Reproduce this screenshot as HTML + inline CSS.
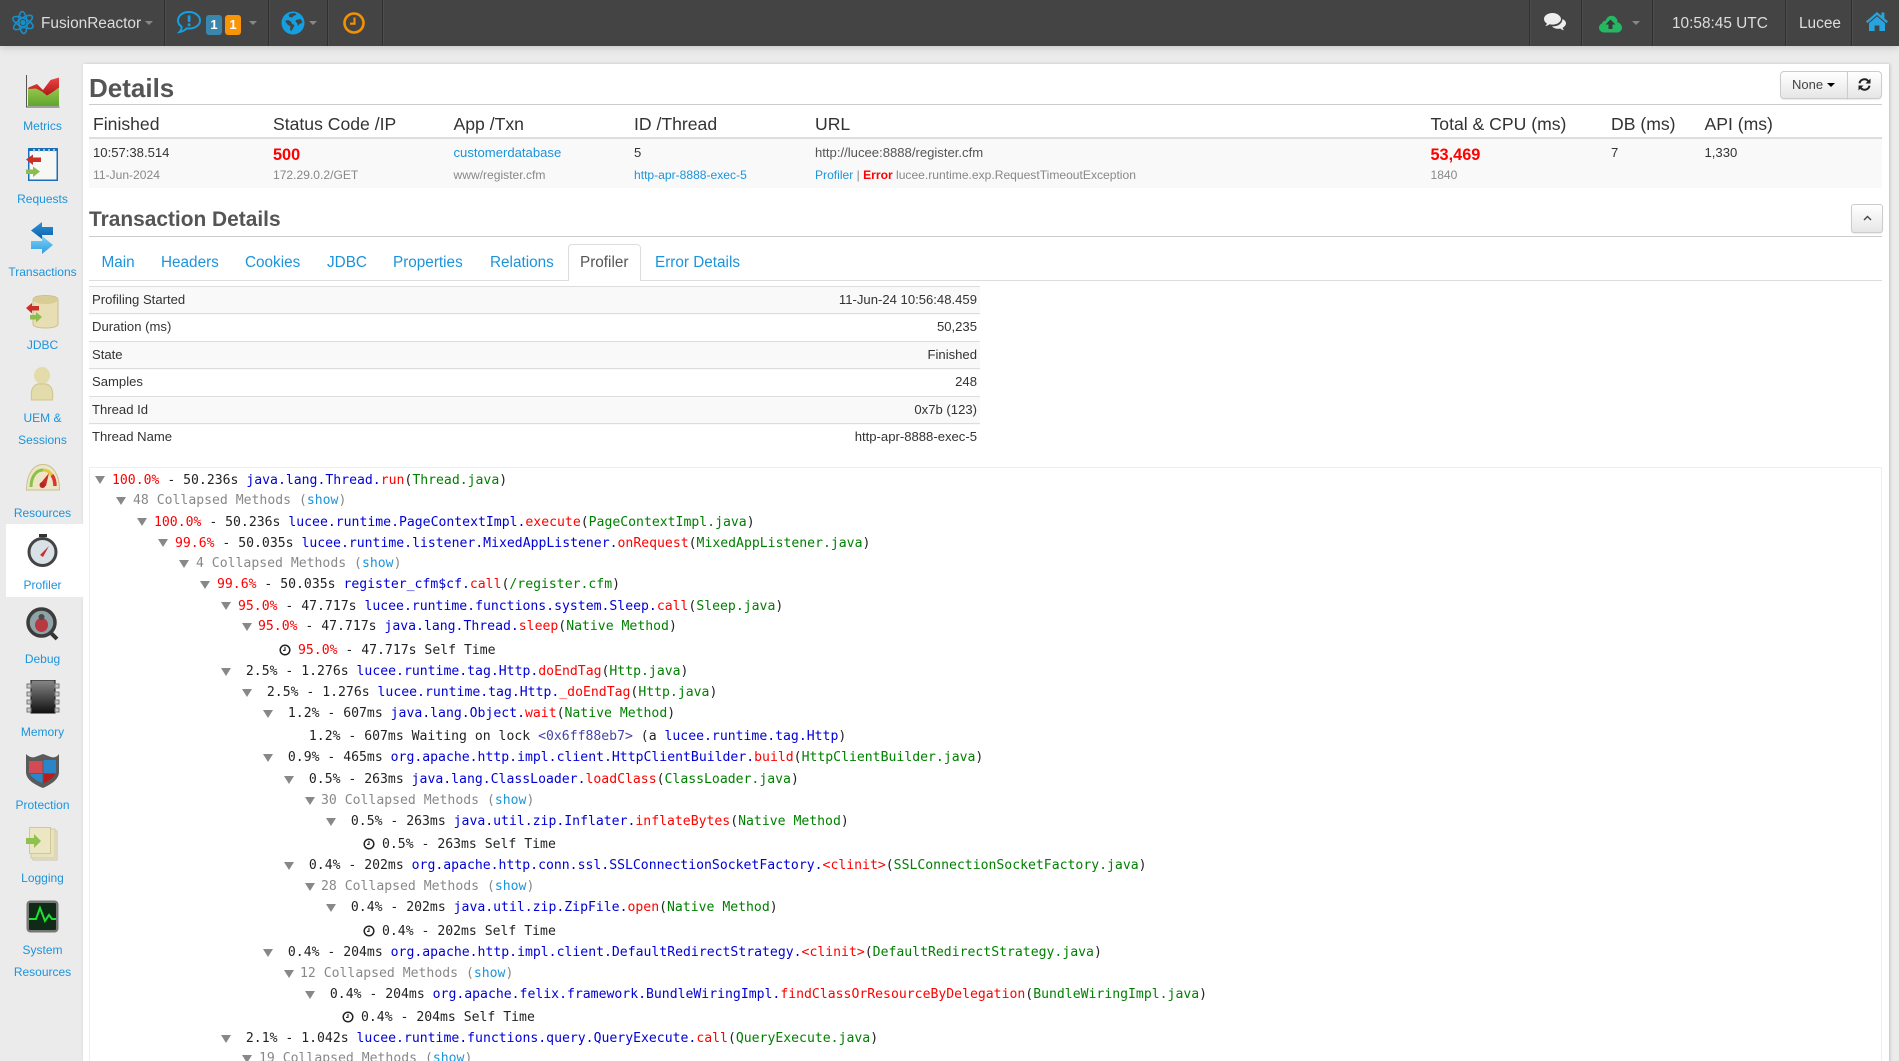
<!DOCTYPE html>
<html><head><meta charset="utf-8"><title>FusionReactor Profiler</title>
<style>
html{margin:0;padding:0;width:1899px;height:1061px;overflow:hidden}
body{margin:0;padding:0;width:1899px;height:1061px;overflow:hidden;position:relative;background:#ebebeb;font-family:"Liberation Sans",sans-serif;color:#333}
.a,.a *{box-sizing:border-box}
.a{position:absolute;white-space:nowrap}
a{color:#1c94db;text-decoration:none}
#top{position:absolute;left:0;top:0;width:1899px;height:46px;background:#444;box-shadow:0 1px 8px rgba(0,0,0,.18)}
.sep{position:absolute;top:0;width:1px;height:46px;background:#2f2f2f;box-shadow:1px 0 0 #4d4d4d}
.tt{position:absolute;color:#ddd;font-size:15.4px;line-height:20px;top:14px;white-space:nowrap}
.car{position:absolute;width:0;height:0;border-left:4px solid transparent;border-right:4px solid transparent;border-top:4px solid #888;top:21px}
.bd{position:absolute;top:15px;width:16px;height:20px;border-radius:3px;color:#fff;font-weight:bold;font-size:13px;line-height:20px;text-align:center}
#panel{position:absolute;left:83px;top:64px;width:1806px;height:1040px;background:#fff;box-shadow:1px 0 3px rgba(0,0,0,.18)}
.sl{position:absolute;left:1px;width:83px;text-align:center;font-size:12px;line-height:20px;color:#1c94db}
.si{position:absolute;left:26px;width:34px;height:34px}
.th{position:absolute;top:113px;font-size:17.6px;line-height:22px;color:#333;white-space:nowrap}
.r1{position:absolute;top:144px;font-size:13.1px;line-height:18px;color:#333;white-space:nowrap}
.r2{position:absolute;top:166px;font-size:12.08px;line-height:18px;color:#888;white-space:nowrap}
.big{color:#f00;font-weight:bold;font-size:16.3px}
.tab{position:absolute;top:252.5px;font-size:15.3px;line-height:20px;color:#1c94db;white-space:nowrap}
.irow{position:absolute;left:89px;width:891px;height:28px;border-top:1px solid #ddd;font-size:13.1px;line-height:26px}
.irow b{font-weight:normal;position:absolute;left:3px;color:#333}
.irow i{font-style:normal;position:absolute;right:3px;color:#333}
.odd{background:#f9f9f9}
.t{position:absolute;font-family:"DejaVu Sans Mono",monospace;font-size:13.14px;line-height:20px;white-space:pre;color:#222;margin-top:1px}
.tri{position:absolute;width:0;height:0;border-left:5px solid transparent;border-right:5px solid transparent;border-top:8px solid #888;margin-left:-1px}
.p{color:#f00}.c{color:#0000d8}.m{color:#f00}.f{color:#008000}.g{color:#888}
.ck{position:absolute;width:12px;height:12px}
</style></head><body>

<div id="panel"></div>

<!-- top bar -->
<div id="top">
<svg class="a" style="left:11px;top:10px" width="24" height="25" viewBox="0 0 24 25" fill="none" stroke="#1690cc" stroke-width="1.6"><ellipse cx="12" cy="12.5" rx="11" ry="4.2" transform="rotate(25 12 12.5)"/><ellipse cx="12" cy="12.5" rx="11" ry="4.2" transform="rotate(-35 12 12.5)"/><ellipse cx="12" cy="12.5" rx="11" ry="4" transform="rotate(85 12 12.5)"/><circle cx="12" cy="12.5" r="2.6" fill="#1690cc" stroke="none"/></svg>
<div class="tt" style="left:41px">FusionReactor</div>
<div class="car" style="left:145px"></div>
<div class="sep" style="left:164px"></div>
<svg class="a" style="left:176px;top:10px" width="26" height="25" viewBox="0 0 26 25" fill="none"><path d="M13 2C6.8 2 2 5.6 2 10.5c0 2.7 1.500 4.800 3.600 6.200.2 2-1 4.300-2 5.300 2.800-.4 5.600-2 7-3.600.8.1 1.600.2 2.400.2 6.200 0 11-3.600 11-8.100S19.200 2 13 2z" stroke="#14a0e0" stroke-width="2"/><rect x="11.700" y="5.200" width="2.800" height="6.800" rx="1" fill="#14a0e0"/><rect x="11.700" y="13.400" width="2.800" height="2.800" rx=".8" fill="#14a0e0"/></svg>
<div class="bd" style="left:206px;background:#3a87ad">1</div>
<div class="bd" style="left:225px;background:#f89406">1</div>
<div class="car" style="left:249px"></div>
<div class="sep" style="left:268px"></div>
<svg class="a" style="left:281px;top:11px" width="24" height="24" viewBox="0 0 24 24"><circle cx="12" cy="12" r="11.500" fill="#14a0e0"/><path d="M9 2.500l5-.5 1.500 2-3 .8-1 1.700-3-.5-1-1.500zM4 10l3-1 3 1.500 1 2.500 2.500 1-1 2.500-2 3.500-1.500-1 .5-3.500-3-2zM15 9l4.500-1 2 3-1.500 1.500-1.500.5-1.500 2-1-3-1.500-1.500z" fill="#444"/></svg>
<div class="car" style="left:309px"></div>
<div class="sep" style="left:327px"></div>
<svg class="a" style="left:343px;top:12px" width="22" height="22" viewBox="0 0 22 22" fill="none"><circle cx="11" cy="11" r="9.500" stroke="#f39200" stroke-width="2.600"/><path d="M11.500 5.500v6.200H7" stroke="#f39200" stroke-width="2.100"/></svg>
<div class="sep" style="left:382px"></div>

<div class="sep" style="left:1529px"></div>
<svg class="a" style="left:1544px;top:13px" width="23" height="19" viewBox="0 0 23 19"><path d="M8.500 0C3.800 0 0 2.700 0 6c0 1.800 1.100 3.400 2.900 4.500-.3 1-.9 1.900-1.600 2.600 1.500-.2 2.900-.9 4-1.900 1 .2 2.100.4 3.200.4 4.700 0 8.500-2.700 8.500-5.600S13.200 0 8.500 0z" fill="#eee"/><path d="M18.300 5.500c.1.300.1.600.1.900 0 3.900-4.200 7-9.500 7-.4 0-.8 0-1.100-.1 1.300 1.500 3.600 2.500 6.200 2.500.8 0 1.600-.1 2.300-.3.900.9 2.200 1.500 3.700 1.700-.7-.7-1.200-1.500-1.400-2.400 2-1 3.400-2.700 3.400-4.500 0-1.900-1.700-3.500-3.700-4.300z" fill="#eee"/></svg>
<div class="sep" style="left:1581px"></div>
<svg class="a" style="left:1599px;top:15px" width="23" height="18" viewBox="0 0 23 18"><path d="M5 17.500C2.300 17.500 0 15.400 0 12.800c0-2 1.300-3.700 3.100-4.400C3.500 6.500 5 5.500 6.500 5.900 7.600 2.800 10 .8 12.500.8c3.500 0 6 2.800 6 6.200v.4c2.600.5 4.500 2.700 4.500 5.300 0 2.700-2.300 4.800-5 4.800z" fill="#25b862"/><path d="M11.500 4.500l5 5h-3v4.500h-4V9.500h-3z" fill="#3a3a3a"/></svg>
<div class="car" style="left:1632px"></div>
<div class="sep" style="left:1652px"></div>
<div class="tt" style="left:1672px">10:58:45 UTC</div>
<div class="sep" style="left:1785px"></div>
<div class="tt" style="left:1799px">Lucee</div>
<div class="sep" style="left:1851px"></div>
<svg class="a" style="left:1865px;top:11px" width="24" height="20" viewBox="0 0 24 20"><path d="M12 1L1 10.400l1.500 1.700L12 4l9.500 8.100 1.500-1.700-3.600-3V1.500h-3v3.300z" fill="#27a4dd"/><path d="M12 5.400L4 12.200V20h5.600v-5.500h4.800V20H20v-7.800z" fill="#27a4dd"/></svg>
</div>

<!-- sidebar -->
<div class="a" style="left:6px;top:524px;width:77px;height:73px;background:#fff"></div>

<svg class="si" style="top:75px" viewBox="0 0 34 34"><defs><linearGradient id="gg" x1="0" y1="0" x2="0" y2="1"><stop offset="0" stop-color="#b8d75f"/><stop offset="1" stop-color="#5ea52e"/></linearGradient><linearGradient id="rr" x1="0" y1="0" x2="0" y2="1"><stop offset="0" stop-color="#e44"/><stop offset="1" stop-color="#b01818"/></linearGradient></defs><path d="M2 13l9-3 7 6 7-11 8-2v28H2z" fill="url(#gg)"/><path d="M2.500 12.500L11 9l6 6 7.500-10L33 2.500v10l-7 5-5 3-5-4-6-3-7.500 .5z" fill="url(#rr)"/><path d="M.5 0v32h33" fill="none" stroke="#555" stroke-width="1"/></svg>
<div class="sl" style="top:116px">Metrics</div>

<svg class="si" style="top:148px" viewBox="0 0 34 34"><rect x="2" y="0" width="30" height="33" fill="#1a70b8"/><rect x="3.500" y="3" width="27" height="28.500" fill="#f7f7f4"/><path d="M8 1v3M13 1v3M18 1v3M23 1v3M28 1v3" stroke="#cde" stroke-width="1.500"/><path d="M0 11.500l7-5v3h8v4.500H7v3z" fill="#c9302c"/><path d="M14 23.500l-7-5v3H0v4.500h7v3z" fill="#8ebd4f"/></svg>
<div class="sl" style="top:189px">Requests</div>

<svg class="si" style="top:221px" viewBox="0 0 34 34"><defs><linearGradient id="b1" x1="0" y1="0" x2="0" y2="1"><stop offset="0" stop-color="#2a93dc"/><stop offset="1" stop-color="#0e5fa6"/></linearGradient><linearGradient id="b2" x1="0" y1="0" x2="0" y2="1"><stop offset="0" stop-color="#7fd0f6"/><stop offset="1" stop-color="#2c9ee0"/></linearGradient></defs><path d="M5 9.500L16 1v5h11v8H16v4z" fill="url(#b1)"/><path d="M27 24L16 15v5H5v8h11v5z" fill="url(#b2)"/></svg>
<div class="sl" style="top:262px">Transactions</div>

<svg class="si" style="top:295px" viewBox="0 0 34 34"><path d="M7 5c0-3 5-4.500 12.500-4.500S32 2 32 5v24c0 2.500-5 4-12.500 4S7 31.500 7 29z" fill="#e7dfb3" stroke="#c9bf8e"/><ellipse cx="19.500" cy="5" rx="12" ry="4" fill="#d9cd95"/><path d="M0 13l6-5v3h7v4.500H6v3z" fill="#c9302c"/><path d="M16 22l-6-5v3H4v4.500h6v3z" fill="#8ebd4f"/></svg>
<div class="sl" style="top:335px">JDBC</div>

<svg class="si" style="top:367px" viewBox="0 0 34 34"><ellipse cx="16" cy="8.500" rx="8" ry="8.500" fill="#e4dbab"/><path d="M5.500 33c-1-9 .5-14 6-16h9c5.500 2 7 7 6 16z" fill="#e4dbab" stroke="#cfc490"/></svg>
<div class="sl" style="top:408px">UEM &amp;</div>
<div class="sl" style="top:430px">Sessions</div>

<svg class="si" style="top:464px" viewBox="0 0 34 34"><path d="M0.500 26C.5 9 8 .5 17 .5S33.500 9 33.500 26z" fill="#ece6c6" stroke="#c9bf8e"/><path d="M5 23C5 13 10 6 17 6" fill="none" stroke="#8cc04b" stroke-width="3"/><path d="M17 6c4 0 7 2 9 5" fill="none" stroke="#e8c33c" stroke-width="3"/><path d="M26 11c2 3 3 6 3 11" fill="none" stroke="#d33" stroke-width="3.500"/><path d="M14 20l9-11-3 13z" fill="#c9302c"/><circle cx="16.500" cy="21" r="3" fill="#b22"/></svg>
<div class="sl" style="top:503px">Resources</div>

<svg class="si" style="top:534px" viewBox="0 0 34 34"><rect x="13" y="0" width="8" height="3" fill="#333"/><circle cx="16.500" cy="18" r="13.500" fill="#d8e2e6" stroke="#444" stroke-width="3"/><path d="M14 21l9-9-6 11z" fill="#c9302c"/></svg>
<div class="sl" style="top:575px">Profiler</div>

<svg class="si" style="top:607px" viewBox="0 0 34 34"><path d="M25 26l6 6" stroke="#333" stroke-width="4"/><circle cx="15.500" cy="15.500" r="13.500" fill="#8fa2a8" stroke="#3c3c3c" stroke-width="3.500"/><ellipse cx="15.500" cy="18" rx="6.500" ry="7" fill="#b73a42"/><circle cx="15.500" cy="10" r="3" fill="#4a4a4a"/></svg>
<div class="sl" style="top:649px">Debug</div>

<svg class="si" style="top:680px" viewBox="0 0 34 34"><defs><linearGradient id="ch" x1="0" y1="0" x2="0" y2="1"><stop offset="0" stop-color="#888"/><stop offset="1" stop-color="#111"/></linearGradient></defs><rect x="5" y="0" width="24" height="33" fill="url(#ch)" stroke="#111"/><path d="M1 4h4v4H1zM1 12h4v4H1zM1 20h4v4H1zM1 28h4v4H1zM29 4h4v4h-4zM29 12h4v4h-4zM29 20h4v4h-4zM29 28h4v4h-4z" fill="#ccc" stroke="#777"/></svg>
<div class="sl" style="top:722px">Memory</div>

<svg class="si" style="top:754px" viewBox="0 0 34 34"><path d="M0 0c3 3 6 4 9 3 3-1 5-2 8-3 3 1 5 2 8 3 3 1 6 0 8-3v18c0 7-7 12-16 16C7 30 0 25 0 18z" fill="#5a5a5a"/><path d="M3 7h13.500v12H3z" fill="#d34a52"/><path d="M17.500 6H30v13H17.500z" fill="#2a86c8"/><path d="M4 20h12.500v9C11 27 6 24 4 20z" fill="#2a86c8"/><path d="M17.500 20H29c-2 4-6.500 7-11.500 9.500z" fill="#b81c1c"/></svg>
<div class="sl" style="top:795px">Protection</div>

<svg class="si" style="top:827px" viewBox="0 0 34 34"><rect x="7" y="4" width="24" height="29" fill="#eee8ca" stroke="#c8c6ac"/><rect x="5" y="2" width="24" height="29" fill="#e8e2c0" stroke="#cfcba8"/><rect x="3.500" y="0.500" width="21" height="26" fill="#ece6c2" stroke="#cfc99a"/><path d="M0 11h8V7l7 7-7 7v-4H0z" fill="#8fc14f"/></svg>
<div class="sl" style="top:868px">Logging</div>

<svg class="si" style="top:900px" viewBox="0 0 34 34"><rect x="0.500" y="0.500" width="32" height="32" rx="4" fill="#777"/><rect x="3" y="3" width="27" height="27" rx="1" fill="#0f2a15"/><path d="M3 19h7l4-11 5 13 4-6 3 4h4" fill="none" stroke="#1fe034" stroke-width="2"/></svg>
<div class="sl" style="top:940px">System</div>
<div class="sl" style="top:962px">Resources</div>

<!-- details header -->
<div class="a" style="left:89px;top:73px;font-size:26px;line-height:30px;font-weight:bold;color:#555">Details</div>
<div class="a" style="left:1780px;top:71px;width:68px;height:28px;border:1px solid #ccc;border-radius:4px 0 0 4px;background:linear-gradient(#fff,#e6e6e6);font-size:13px;line-height:26px;padding-left:11px;color:#444;box-shadow:0 1px 1px rgba(0,0,0,.08)">None<span style="display:inline-block;width:0;height:0;border-left:4px solid transparent;border-right:4px solid transparent;border-top:4px solid #000;margin-left:4px;vertical-align:2px"></span></div>
<div class="a" style="left:1847px;top:71px;width:35px;height:28px;border:1px solid #ccc;border-radius:0 4px 4px 0;background:linear-gradient(#fff,#e6e6e6);box-shadow:0 1px 1px rgba(0,0,0,.08)"></div>
<svg class="a" style="left:1858px;top:78px" width="13" height="13" viewBox="0 0 13 13" fill="none"><path d="M1.500 5.300A5 5 0 0 1 10.500 3.400" stroke="#222" stroke-width="2"/><path d="M12.500 .5v5h-5z" fill="#222"/><path d="M11.500 7.700A5 5 0 0 1 2.500 9.600" stroke="#222" stroke-width="2"/><path d="M.5 12.500v-5h5z" fill="#222"/></svg>
<div class="a" style="left:89px;top:104px;width:1793px;height:1px;background:#ccc"></div>

<div class="th" style="left:93px">Finished</div>
<div class="th" style="left:273px">Status Code /IP</div>
<div class="th" style="left:453.500px">App /Txn</div>
<div class="th" style="left:634px">ID /Thread</div>
<div class="th" style="left:815px">URL</div>
<div class="th" style="left:1430.500px">Total &amp; CPU (ms)</div>
<div class="th" style="left:1611px">DB (ms)</div>
<div class="th" style="left:1704.500px">API (ms)</div>
<div class="a" style="left:89px;top:137px;width:1793px;height:2px;background:#ddd"></div>
<div class="a" style="left:89px;top:139px;width:1793px;height:49px;background:#f9f9f9"></div>

<div class="r1" style="left:93px;top:144px">10:57:38.514</div>
<div class="r1 big" style="left:273px;top:145.500px">500</div>
<div class="r1" style="left:453.500px"><a>customerdatabase</a></div>
<div class="r1" style="left:634px">5</div>
<div class="r1" style="left:815px;color:#555">http://lucee:8888/register.cfm</div>
<div class="r1 big" style="left:1430.500px;top:145.500px">53,469</div>
<div class="r1" style="left:1611px">7</div>
<div class="r1" style="left:1704.500px">1,330</div>

<div class="r2" style="left:93px">11-Jun-2024</div>
<div class="r2" style="left:273px">172.29.0.2/GET</div>
<div class="r2" style="left:453.500px">www/register.cfm</div>
<div class="r2" style="left:634px"><a>http-apr-8888-exec-5</a></div>
<div class="r2" style="left:815px"><a>Profiler</a> | <b style="color:#f00">Error</b> lucee.runtime.exp.RequestTimeoutException</div>
<div class="r2" style="left:1430.500px">1840</div>

<!-- transaction details -->
<div class="a" style="left:89px;top:208px;font-size:20.9px;line-height:24px;font-weight:bold;color:#555">Transaction Details</div>
<div class="a" style="left:1851px;top:204px;width:32px;height:29px;border:1px solid #ccc;border-radius:3px;background:linear-gradient(#fff,#e6e6e6);box-shadow:0 1px 1px rgba(0,0,0,.08)"></div>
<svg class="a" style="left:1863px;top:215px" width="9" height="7" viewBox="0 0 9 7" fill="none"><path d="M1 5l3.500-3.500L8 5" stroke="#444" stroke-width="1.400"/></svg>
<div class="a" style="left:89px;top:236px;width:1793px;height:1px;background:#ccc"></div>

<div class="a" style="left:89px;top:280px;width:1793px;height:1px;background:#ddd"></div>
<div class="a" style="left:568px;top:244px;width:73px;height:37px;background:#fff;border:1px solid #ddd;border-bottom:0;border-radius:4px 4px 0 0"></div>
<div class="tab" style="left:101.500px">Main</div>
<div class="tab" style="left:161px">Headers</div>
<div class="tab" style="left:245px">Cookies</div>
<div class="tab" style="left:327px">JDBC</div>
<div class="tab" style="left:393px">Properties</div>
<div class="tab" style="left:490px">Relations</div>
<div class="tab" style="left:580px;color:#555">Profiler</div>
<div class="tab" style="left:655px">Error Details</div>

<!-- info table -->
<div class="irow odd" style="top:286px;border-top-width:1px"><b>Profiling Started</b><i>11-Jun-24 10:56:48.459</i></div>
<div class="irow" style="top:313px"><b>Duration (ms)</b><i>50,235</i></div>
<div class="irow odd" style="top:341px"><b>State</b><i>Finished</i></div>
<div class="irow" style="top:368px"><b>Samples</b><i>248</i></div>
<div class="irow odd" style="top:396px"><b>Thread Id</b><i>0x7b (123)</i></div>
<div class="irow" style="top:423px"><b>Thread Name</b><i>http-apr-8888-exec-5</i></div>

<!-- profiler tree -->
<div class="a" style="left:89px;top:467px;width:1793px;height:594px;border:1px solid #eee;border-bottom:0"></div>

<div class="tri" style="left:96px;top:476px"></div><div class="t" style="left:112px;top:470px"><span class="p">100.0%</span> - 50.236s <span class="c">java.lang.Thread.</span><span class="m">run</span>(<span class="f">Thread.java</span>)</div>
<div class="tri" style="left:117px;top:497px"></div><div class="t g" style="left:133px;top:490px">48 Collapsed Methods (<a>show</a>)</div>
<div class="tri" style="left:138px;top:518px"></div><div class="t" style="left:154px;top:512px"><span class="p">100.0%</span> - 50.236s <span class="c">lucee.runtime.PageContextImpl.</span><span class="m">execute</span>(<span class="f">PageContextImpl.java</span>)</div>
<div class="tri" style="left:159px;top:539px"></div><div class="t" style="left:175px;top:533px"><span class="p">99.6%</span> - 50.035s <span class="c">lucee.runtime.listener.MixedAppListener.</span><span class="m">onRequest</span>(<span class="f">MixedAppListener.java</span>)</div>
<div class="tri" style="left:180px;top:560px"></div><div class="t g" style="left:196px;top:553px">4 Collapsed Methods (<a>show</a>)</div>
<div class="tri" style="left:201px;top:581px"></div><div class="t" style="left:217px;top:574px"><span class="p">99.6%</span> - 50.035s <span class="c">register_cfm$cf.</span><span class="m">call</span>(<span class="f">/register.cfm</span>)</div>
<div class="tri" style="left:222px;top:602px"></div><div class="t" style="left:238px;top:596px"><span class="p">95.0%</span> - 47.717s <span class="c">lucee.runtime.functions.system.Sleep.</span><span class="m">call</span>(<span class="f">Sleep.java</span>)</div>
<div class="tri" style="left:243px;top:623px"></div><div class="t" style="left:258px;top:616px"><span class="p">95.0%</span> - 47.717s <span class="c">java.lang.Thread.</span><span class="m">sleep</span>(<span class="f">Native Method</span>)</div>
<svg class="ck" style="left:279px;top:644px" viewBox="0 0 12 12" fill="none" stroke="#222"><circle cx="6" cy="6" r="4.800" stroke-width="1.500"/><path d="M6 3v3.400H4" stroke-width="1.100"/></svg><div class="t" style="left:298px;top:640px"><span class="p">95.0%</span> - 47.717s Self Time</div>
<div class="tri" style="left:222px;top:668px"></div><div class="t" style="left:238px;top:661px"> 2.5% - 1.276s <span class="c">lucee.runtime.tag.Http.</span><span class="m">doEndTag</span>(<span class="f">Http.java</span>)</div>
<div class="tri" style="left:243px;top:689px"></div><div class="t" style="left:259px;top:682px"> 2.5% - 1.276s <span class="c">lucee.runtime.tag.Http.</span><span class="m">_doEndTag</span>(<span class="f">Http.java</span>)</div>
<div class="tri" style="left:264px;top:710px"></div><div class="t" style="left:280px;top:703px"> 1.2% - 607ms <span class="c">java.lang.Object.</span><span class="m">wait</span>(<span class="f">Native Method</span>)</div>
<div class="t" style="left:301px;top:726px"> 1.2% - 607ms Waiting on lock <span class="c" style="color:#44a">&lt;0x6ff88eb7&gt;</span> (a <span class="c">lucee.runtime.tag.Http</span>)</div>
<div class="tri" style="left:264px;top:754px"></div><div class="t" style="left:280px;top:747px"> 0.9% - 465ms <span class="c">org.apache.http.impl.client.HttpClientBuilder.</span><span class="m">build</span>(<span class="f">HttpClientBuilder.java</span>)</div>
<div class="tri" style="left:285px;top:776px"></div><div class="t" style="left:301px;top:769px"> 0.5% - 263ms <span class="c">java.lang.ClassLoader.</span><span class="m">loadClass</span>(<span class="f">ClassLoader.java</span>)</div>
<div class="tri" style="left:306px;top:797px"></div><div class="t g" style="left:321px;top:790px">30 Collapsed Methods (<a>show</a>)</div>
<div class="tri" style="left:327px;top:818px"></div><div class="t" style="left:343px;top:811px"> 0.5% - 263ms <span class="c">java.util.zip.Inflater.</span><span class="m">inflateBytes</span>(<span class="f">Native Method</span>)</div>
<svg class="ck" style="left:363px;top:838px" viewBox="0 0 12 12" fill="none" stroke="#222"><circle cx="6" cy="6" r="4.800" stroke-width="1.500"/><path d="M6 3v3.400H4" stroke-width="1.100"/></svg><div class="t" style="left:382px;top:834px">0.5% - 263ms Self Time</div>
<div class="tri" style="left:285px;top:862px"></div><div class="t" style="left:301px;top:855px"> 0.4% - 202ms <span class="c">org.apache.http.conn.ssl.SSLConnectionSocketFactory.</span><span class="m">&lt;clinit&gt;</span>(<span class="f">SSLConnectionSocketFactory.java</span>)</div>
<div class="tri" style="left:306px;top:883px"></div><div class="t g" style="left:321px;top:876px">28 Collapsed Methods (<a>show</a>)</div>
<div class="tri" style="left:327px;top:904px"></div><div class="t" style="left:343px;top:897px"> 0.4% - 202ms <span class="c">java.util.zip.ZipFile.</span><span class="m">open</span>(<span class="f">Native Method</span>)</div>
<svg class="ck" style="left:363px;top:925px" viewBox="0 0 12 12" fill="none" stroke="#222"><circle cx="6" cy="6" r="4.800" stroke-width="1.500"/><path d="M6 3v3.400H4" stroke-width="1.100"/></svg><div class="t" style="left:382px;top:921px">0.4% - 202ms Self Time</div>
<div class="tri" style="left:264px;top:949px"></div><div class="t" style="left:280px;top:942px"> 0.4% - 204ms <span class="c">org.apache.http.impl.client.DefaultRedirectStrategy.</span><span class="m">&lt;clinit&gt;</span>(<span class="f">DefaultRedirectStrategy.java</span>)</div>
<div class="tri" style="left:285px;top:970px"></div><div class="t g" style="left:300px;top:963px">12 Collapsed Methods (<a>show</a>)</div>
<div class="tri" style="left:306px;top:991px"></div><div class="t" style="left:322px;top:984px"> 0.4% - 204ms <span class="c">org.apache.felix.framework.BundleWiringImpl.</span><span class="m">findClassOrResourceByDelegation</span>(<span class="f">BundleWiringImpl.java</span>)</div>
<svg class="ck" style="left:342px;top:1011px" viewBox="0 0 12 12" fill="none" stroke="#222"><circle cx="6" cy="6" r="4.800" stroke-width="1.500"/><path d="M6 3v3.400H4" stroke-width="1.100"/></svg><div class="t" style="left:361px;top:1007px">0.4% - 204ms Self Time</div>
<div class="tri" style="left:222px;top:1035px"></div><div class="t" style="left:238px;top:1028px"> 2.1% - 1.042s <span class="c">lucee.runtime.functions.query.QueryExecute.</span><span class="m">call</span>(<span class="f">QueryExecute.java</span>)</div>
<div class="tri" style="left:243px;top:1055px"></div><div class="t g" style="left:259px;top:1048px">19 Collapsed Methods (<a>show</a>)</div>

</body></html>
